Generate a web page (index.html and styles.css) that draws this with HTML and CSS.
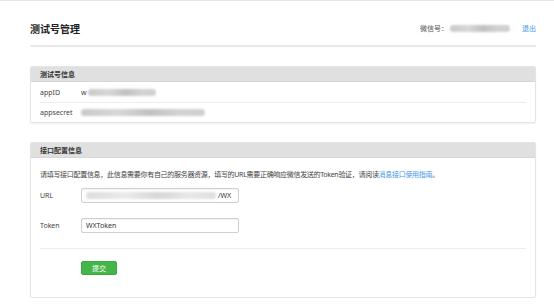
FILE: index.html
```html
<!DOCTYPE html>
<html lang="zh-CN">
  <head>
    <meta charset="UTF-8" />
    <title>测试号管理</title>
    <link rel="stylesheet" href="styles.css">
  </head>
  <body>
    <div id="page">
      <div id="header">
        <h1>测试号管理</h1>
        <div class="account">
          <span>微信号：</span>
          <span class="blur blur-id"></span>
          <a class="logout" href="#">退出</a>
        </div>
      </div>

      <div class="panel">
        <div class="panel-title">测试号信息</div>
        <div class="panel-body">
          <div class="info-row">
            <span class="label">appID</span>
            <span class="value">w<span class="blur blur-appid"></span></span>
          </div>
          <div class="info-row">
            <span class="label">appsecret</span>
            <span class="value"><span class="blur blur-secret"></span></span>
          </div>
        </div>
      </div>

      <div class="panel">
        <div class="panel-title">接口配置信息</div>
        <div class="panel-body config">
          <p class="desc">请填写接口配置信息，此信息需要你有自己的服务器资源，填写的URL需要正确响应微信发送的Token验证，请阅读<a href="#">消息接口使用指南</a>。</p>
          <div class="form-row">
            <span class="label">URL</span>
            <div class="input"><span class="blur blur-url"></span>/WX</div>
          </div>
          <div class="form-row">
            <span class="label">Token</span>
            <div class="input">WXToken</div>
          </div>
          <div class="actions">
            <button>提交</button>
          </div>
        </div>
      </div>
    </div>
  </body>
</html>
```

FILE: styles.css
```css
* {
  margin: 0;
  padding: 0;
  box-sizing: border-box;
}
body {
  background-color: #fff;
  border-top: 1px solid #e6e6e6;
  font-family: "Noto Sans", "Noto Sans CJK SC", sans-serif;
  font-size: 7px;
  color: #444;
}
a {
  color: #459ae9;
  text-decoration: none;
}
#page {
  margin: 0 18px 0 30px;
}
#header {
  display: flex;
  justify-content: space-between;
  align-items: center;
  height: 46px;
  padding-top: 10px;
  border-bottom: 2px solid #e8e8e8;
}
#header h1 {
  font-size: 10px;
  font-weight: bold;
  color: #222;
}
.account {
  display: flex;
  align-items: center;
}
.account span {
  color: #555;
}
.logout {
  margin-left: 12px;
}
.blur {
  display: inline-block;
  height: 7px;
  border-radius: 4px;
  background: linear-gradient(90deg, #c9c9c9, #d8d8d8 30%, #c4c0c0 55%, #d3d3d3 80%, #cfcfcf);
  filter: blur(1px);
  vertical-align: middle;
}
.blur-id {
  width: 60px;
  margin-left: 2px;
}
.blur-appid {
  width: 68px;
  margin-left: 1px;
}
.blur-secret {
  width: 124px;
}
.blur-url {
  width: 130px;
  margin-right: 2px;
  background: linear-gradient(90deg, #dcdcdc, #ebebeb 30%, #d6d6d6 55%, #e8e8e8 80%, #dedede);
}
.panel {
  margin-top: 19px;
  border: 1px solid #e4e4e4;
  border-radius: 2px;
  box-shadow: 0 1px 2px rgba(0, 0, 0, 0.06);
}
.panel-title {
  height: 15px;
  line-height: 15px;
  padding-left: 9px;
  background-color: #e0e0e0;
  border-bottom: 1px solid #d6d6d6;
  font-weight: bold;
  color: #333;
}
.panel-body {
  padding: 0 9px;
}
.info-row {
  display: flex;
  align-items: center;
  height: 20px;
}
.info-row + .info-row {
  border-top: 1px solid #ededed;
}
.label {
  width: 41px;
  flex-shrink: 0;
}
.value {
  display: flex;
  align-items: center;
}
.config {
  padding-top: 11px;
  padding-bottom: 22px;
}
.desc {
  line-height: 12px;
  letter-spacing: -0.3px;
  margin-bottom: 7px;
}
.form-row {
  display: flex;
  align-items: center;
  height: 15px;
}
.form-row + .form-row {
  margin-top: 15px;
}
.input {
  display: flex;
  align-items: center;
  width: 158px;
  height: 15px;
  padding-left: 4px;
  border: 1px solid #cfcfcf;
  border-radius: 2px;
  box-shadow: inset 0 1px 1px rgba(0, 0, 0, 0.05);
  color: #333;
}
.actions {
  margin-top: 15px;
  padding-top: 12px;
  padding-left: 41px;
  border-top: 1px solid #ececec;
}
.actions button {
  width: 36px;
  height: 14px;
  background-color: #44b549;
  border: 1px solid #3ea943;
  border-radius: 2px;
  color: #fff;
  font-family: "Noto Sans CJK SC", sans-serif;
  font-size: 7px;
}
```
